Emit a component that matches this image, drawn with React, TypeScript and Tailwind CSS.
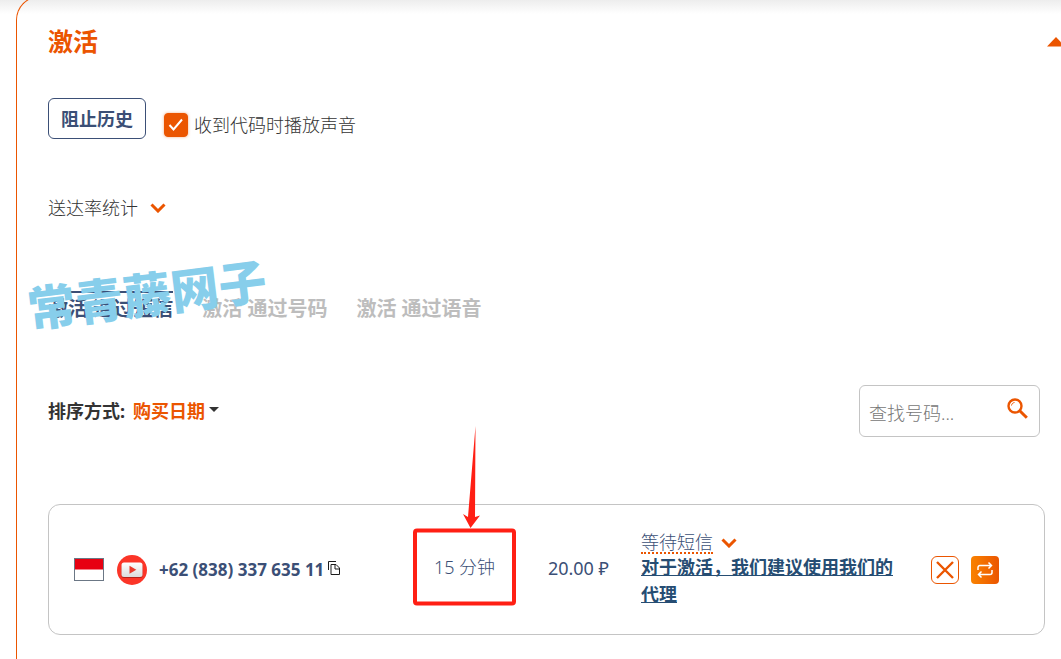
import { useState } from "react";

const tabs = [
  { id: "sms", label: "激活 通过短信" },
  { id: "number", label: "激活 通过号码" },
  { id: "voice", label: "激活 通过语音" },
];

function Chevron() {
  return (
    <svg width="16" height="10" viewBox="0 0 16 10" fill="none" stroke="#eb5500" strokeWidth="3" aria-hidden="true">
      <path d="M1.5 1.5 8 8l6.5-6.5" />
    </svg>
  );
}

function YoutubeIcon() {
  return (
    <svg width="30" height="30" viewBox="0 0 30 30" aria-label="YouTube">
      <defs>
        <linearGradient id="yt-plate" x1="0" y1="0" x2="0" y2="1">
          <stop offset="0" stopColor="#fff" />
          <stop offset="1" stopColor="#dcdcdc" />
        </linearGradient>
      </defs>
      <circle cx="15" cy="15" r="15" fill="#fb3528" />
      <rect x="4.5" y="8.5" width="21" height="14.5" rx="2.500" fill="#b3241b" />
      <rect x="4.5" y="7.5" width="21" height="14.5" rx="2.500" fill="url(#yt-plate)" />
      <path d="M12.500 10.800v8l6.800-4z" fill="#ea3a2c" />
    </svg>
  );
}

function CopyIcon() {
  return (
    <svg width="12" height="14" viewBox="0 0 12 14" fill="none" stroke="#1c1c1c" aria-hidden="true">
      <path d="M.5 9V.5H8" />
      <path d="M3 3.500h5l3.500 3.500v6.500H3z" />
      <path d="M7 3.500V8h4.500" />
    </svg>
  );
}

function SearchIcon() {
  return (
    <svg width="21" height="21" viewBox="0 0 21 21" fill="none" stroke="#eb5500" aria-hidden="true">
      <circle cx="8" cy="8" r="6.500" strokeWidth="2.400" />
      <path d="m12.500 12.500 7.300 7.300" strokeWidth="3" />
      <path d="M4.500 7.500C4.800 5.800 5.800 4.800 7.500 4.500" strokeWidth="1" />
    </svg>
  );
}

function ActivationRow() {
  return (
    <div className="mt-[67px] grid min-h-[131px] grid-cols-[339px_103px_125px_1fr_113px] items-center rounded-xl border border-[#c4c4c4] pl-[25px] text-[#3b4f76]">
      <div className="flex items-center">
        <svg width="30" height="23" viewBox="0 0 30 23" aria-label="Indonesia">
          <rect x=".5" y=".5" width="29" height="22" fill="#fff" stroke="#6b7785" />
          <rect x="1" y="1" width="28" height="10.500" fill="#e70011" />
        </svg>
        <span className="ml-[13px]">
          <YoutubeIcon />
        </span>
        <span className="ml-3 whitespace-nowrap text-[17px] font-bold">+62 (838) 337 635 11</span>
        <button aria-label="复制" className="mb-1 ml-1">
          <CopyIcon />
        </button>
      </div>

      <div className="relative mb-1.5 text-center text-lg font-light">
        15 分钟
        {/* Timer highlight */}
        <div className="pointer-events-none absolute inset-x-0 top-1/2 h-[77px] -translate-y-1/2 rounded border-4 border-[#ff1f14]" />
        <svg
          className="pointer-events-none absolute bottom-[53px] left-[49px]"
          width="18"
          height="102"
          viewBox="0 0 18 102"
          fill="#ff1f14"
          aria-hidden="true"
        >
          <path d="M13.500 0 13 91l5-1.500-9.500 12.500L1 88l5 3z" />
        </svg>
      </div>

      <div className="mb-1 text-center text-lg">20.00 ₽</div>

      <div className="max-w-[256px] text-lg leading-[27px]">
        <button className="flex items-center gap-2 font-light">
          <span className="border-b-2 border-dotted border-[#eb5500] leading-[20px]">等待短信</span>
          <Chevron />
        </button>
        <a href="#proxy" className="font-bold text-[#264d73] underline">
          对于激活，我们建议使用我们的代理
        </a>
      </div>

      <div className="flex gap-3">
        <button aria-label="取消" className="flex size-7 items-center justify-center rounded-md border border-[#eb5500]">
          <svg width="18" height="18" viewBox="0 0 18 18" stroke="#eb5500" strokeWidth="2.400" aria-hidden="true">
            <path d="m1 1 16 16M17 1 1 17" />
          </svg>
        </button>
        <button
          aria-label="重复"
          className="flex size-7 items-center justify-center rounded bg-linear-to-r from-[#f98200] to-[#eb5500]"
        >
          <svg width="18" height="18" viewBox="0 0 18 18" fill="none" stroke="#fff" strokeWidth="1.500" aria-hidden="true">
            <path d="M2 9V6.500a2 2 0 0 1 2-2h11M12.500 1.500l3 3-3 3" />
            <path d="M16 9v2.500a2 2 0 0 1-2 2H3M5.500 10.500l-3 3 3 3" />
          </svg>
        </button>
      </div>
    </div>
  );
}

export default function App() {
  const [activeTab, setActiveTab] = useState("sms");
  const [sound, setSound] = useState(true);

  return (
    <div className="relative flex min-h-screen flex-col overflow-hidden bg-[linear-gradient(#ededed,#fff_14px)] font-['Noto_Sans','Noto_Sans_CJK_SC',sans-serif] text-[#333]">
      <section className="-mt-1 -mr-4 ml-4 flex-1 rounded-tl-[24px] border-t border-l border-[#eb5500] pt-[27px] pr-8 pl-[31px]">
        <header className="-mr-5 flex h-9 items-center justify-between">
          <h1 className="text-[25px] font-bold text-[#eb5500]">激活</h1>
          <button aria-label="收起">
            <svg width="18" height="10" viewBox="0 0 18 10" fill="#eb5500" aria-hidden="true">
              <path d="m9 0 9 9.500H0z" />
            </svg>
          </button>
        </header>

        <div className="mt-[38px] flex h-[41px] items-center">
          <button className="h-full rounded-md border border-[#3b4f76] px-3 text-lg leading-none font-bold text-[#3b4f76]">
            阻止历史
          </button>
          <label className="mt-3 ml-[18px] flex items-center gap-1.5 text-lg font-light">
            <span className="relative flex size-6">
              <input
                type="checkbox"
                checked={sound}
                onChange={(e) => setSound(e.target.checked)}
                className="peer size-6 appearance-none rounded border border-[#eb5500] shadow-[0_0_3px_#eb550080] checked:bg-[#eb5500]"
              />
              <svg
                className="pointer-events-none absolute inset-0 hidden peer-checked:block"
                width="24"
                height="24"
                viewBox="0 0 24 24"
                fill="none"
                stroke="#fff"
                strokeWidth="2"
                aria-hidden="true"
              >
                <path d="m5.500 12 4 4.500L18 6.500" />
              </svg>
            </span>
            收到代码时播放声音
          </label>
        </div>

        <button className="mt-[55px] flex h-7 items-center gap-3 text-lg font-light">
          送达率统计
          <Chevron />
        </button>

        <nav className="mt-[69px] flex gap-[29px]">
          {tabs.map((tab) => (
            <button
              key={tab.id}
              onClick={() => setActiveTab(tab.id)}
              className={`border-t-2 text-xl leading-[32px] font-bold ${
                tab.id === activeTab ? "border-[#3b4f76] text-[#3b4f76]" : "border-transparent text-[#bdbdbd]"
              }`}
            >
              {tab.label}
            </button>
          ))}
        </nav>

        <div className="mt-[60px] mr-[5px] flex items-center justify-between">
          <div className="flex items-center text-lg font-bold">
            <label htmlFor="sort">排序方式:</label>
            <select id="sort" className="ml-2 appearance-none field-sizing-content text-[#eb5500]">
              <option>购买日期</option>
            </select>
            <svg className="mb-1 ml-1" width="10" height="5" viewBox="0 0 10 5" fill="#333" aria-hidden="true">
              <path d="M0 0h10L5 5z" />
            </svg>
          </div>
          <div className="flex h-[52px] w-[181px] items-center rounded-md border border-[#c4c4c4] pr-[11px] pl-[9px]">
            <input
              type="search"
              aria-label="查找号码"
              placeholder="查找号码..."
              className="h-full min-w-0 flex-1 pt-1 text-lg font-light outline-none placeholder:text-[#777]"
            />
            <button aria-label="搜索" className="mb-1.5">
              <SearchIcon />
            </button>
          </div>
        </div>

        <ActivationRow />
      </section>

      {/* Watermark */}
      <div className="pointer-events-none absolute top-[261px] left-[27px] -rotate-7 text-[48px] leading-[68px] font-black whitespace-nowrap text-[#87ceeb]">
        常青藤网子
      </div>
    </div>
  );
}
